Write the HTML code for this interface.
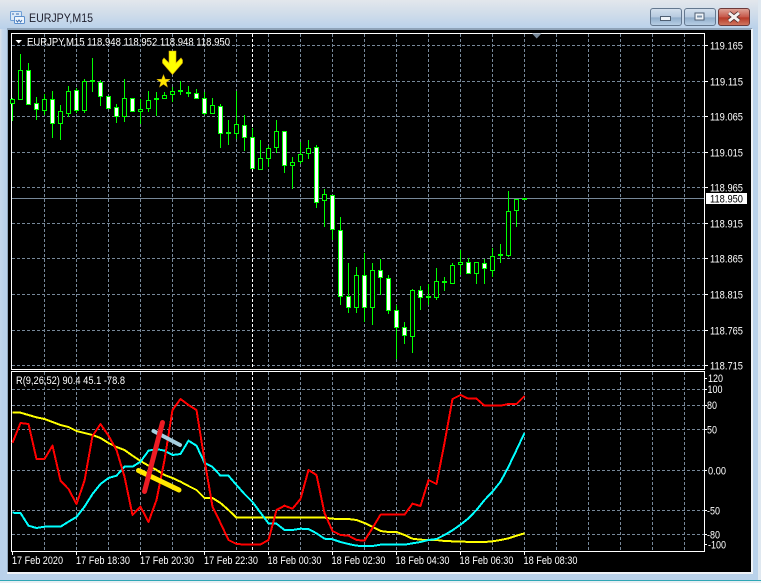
<!DOCTYPE html>
<html><head><meta charset="utf-8"><title>EURJPY,M15</title>
<style>
html,body{margin:0;padding:0;width:761px;height:583px;overflow:hidden;background:#fff}
svg{display:block}
text{font-family:"Liberation Sans",sans-serif;font-size:11px;fill:#fff}
</style></head><body>
<svg width="761" height="583" viewBox="0 0 761 583" xmlns="http://www.w3.org/2000/svg">
<defs>
<linearGradient id="tb" x1="0" y1="0" x2="0" y2="1"><stop offset="0" stop-color="#e3e7ec"/><stop offset=".5" stop-color="#cfdcea"/><stop offset="1" stop-color="#b9d1ea"/></linearGradient>
<linearGradient id="lf" x1="0" y1="0" x2="1" y2="1"><stop offset="0" stop-color="#dde3ea"/><stop offset=".15" stop-color="#c5d8ec"/><stop offset=".5" stop-color="#b9d1ea"/><stop offset="1" stop-color="#bad2ea"/></linearGradient>
<linearGradient id="bt" x1="0" y1="0" x2="0" y2="1"><stop offset="0" stop-color="#d5e1ee"/><stop offset=".5" stop-color="#b6cadf"/><stop offset=".55" stop-color="#91aecb"/><stop offset="1" stop-color="#b9d0e6"/></linearGradient>
<linearGradient id="cl" x1="0" y1="0" x2="0" y2="1"><stop offset="0" stop-color="#dfa69a"/><stop offset=".5" stop-color="#c7594a"/><stop offset=".55" stop-color="#b73a28"/><stop offset="1" stop-color="#d17a63"/></linearGradient>
</defs>
<rect width="761" height="583" fill="#bad2ea"/>
<rect width="761" height="29" fill="url(#tb)"/>
<rect x="0" y="29" width="8" height="551" fill="url(#lf)"/>
<rect x="7" y="28" width="745" height="2" fill="#8fa3b8"/>
<rect x="7" y="29" width="1" height="545" fill="#8ea4ba"/>
<rect x="751" y="29" width="2" height="545" fill="#eef2f6"/>
<rect x="7" y="572" width="746" height="2" fill="#eef2f6"/>
<rect x="0" y="580" width="761" height="1" fill="#2fa6b5"/>
<rect x="0" y="581" width="761" height="2" fill="#e8eef3"/>
<rect x="758" y="0" width="3" height="580" fill="#dfe8f0"/>

<!-- title -->
<g>
<rect x="10.5" y="11.5" width="11" height="9" rx="1" fill="#dbe9f7" stroke="#6f9fd6"/>
<rect x="14.5" y="16.5" width="10" height="7" rx="1" fill="#eef5fc" stroke="#5c8fcc"/>
<path d="M12 14h2M16 14h3M16 20l1.500 2 1.500-2 1.500 2 1.500-2" fill="none" stroke="#3e6fb0"/>
</g>
<text x="29" y="22" style="font-size:12px;fill:#1d1d2b" textLength="64" lengthAdjust="spacingAndGlyphs">EURJPY,M15</text>

<!-- buttons -->
<rect x="650.500" y="8.500" width="31" height="17" rx="2.500" fill="url(#bt)" stroke="#64788f"/>
<rect x="684.500" y="8.500" width="31" height="17" rx="2.500" fill="url(#bt)" stroke="#64788f"/>
<rect x="718.500" y="8.500" width="31" height="17" rx="2.500" fill="url(#cl)" stroke="#6d3a3a"/>
<rect x="660.500" y="16.500" width="10" height="4" fill="#eef3f8" stroke="#4f5f72"/>
<rect x="695" y="13" width="9" height="7" fill="#eef3f8" stroke="#4f5f72"/>
<rect x="697" y="15.500" width="5" height="2" fill="#7d93aa"/>
<path d="M729 13l10 8M739 13l-10 8" stroke="#4a2a2a" stroke-width="4.500"/>
<path d="M729 13l10 8M739 13l-10 8" stroke="#f4f1ef" stroke-width="3"/>

<!-- chart background -->
<rect x="8" y="30" width="743" height="542" fill="#000"/>

<!-- grid -->
<g fill="none" stroke="#778899" stroke-dasharray="3 2">
<path d="M12 45.500H704M12 81.500H704M12 116.500H704M12 152.500H704M12 187.500H704M12 223.500H704M12 258.500H704M12 294.500H704M12 330.500H704M12 365.500H704"/>
<path d="M12 389.500H704M12 405.500H704M12 429.500H704M12 470.500H704M12 510.500H704M12 534.500H704"/>
<path d="M44.500 34V369M76.500 34V369M108.500 34V369M140.500 34V369M172.500 34V369M204.500 34V369M236.500 34V369M268.500 34V369M300.500 34V369M332.500 34V369M364.500 34V369M396.500 34V369M428.500 34V369M460.500 34V369M492.500 34V369M524.500 34V369M556.500 34V369M588.500 34V369M620.500 34V369M652.500 34V369M684.500 34V369"/>
<path d="M44.500 372V551M76.500 372V551M108.500 372V551M140.500 372V551M172.500 372V551M204.500 372V551M236.500 372V551M268.500 372V551M300.500 372V551M332.500 372V551M364.500 372V551M396.500 372V551M428.500 372V551M460.500 372V551M492.500 372V551M524.500 372V551M556.500 372V551M588.500 372V551M620.500 372V551M652.500 372V551M684.500 372V551"/>
</g>
<path d="M252.500 34V369M252.500 372V551" stroke="#fff" stroke-dasharray="3 2" fill="none"/>

<!-- bid line -->
<path d="M12 198.500H704" stroke="#778899"/>

<!-- frames -->
<g fill="none" stroke="#fff">
<rect x="11.500" y="33.500" width="693" height="336"/>
<rect x="11.500" y="371.500" width="693" height="180"/>
<path d="M705 45.500h3M705 81.500h3M705 116.500h3M705 152.500h3M705 187.500h3M705 223.500h3M705 258.500h3M705 294.500h3M705 330.500h3M705 365.500h3"/>
<path d="M705 378.500h2M705 389.500h2M705 405.500h2M705 429.500h2M705 470.500h2M705 510.500h2M705 534.500h2M705 544.500h2"/>
<path d="M12.500 552v3M76.500 552v3M140.500 552v3M204.500 552v3M268.500 552v3M332.500 552v3M396.500 552v3M460.500 552v3M524.500 552v3"/>
</g>

<!-- wicks -->
<path fill="none" stroke="#0f0" d="M12.500 98V121M20.500 54V100M28.500 63V105M36.500 97V120M44.500 94V115M52.500 91V138M60.500 105V140M68.500 86V117M76.500 88V113M84.500 79V113M92.500 58V92M100.500 80V106M108.500 96V108M116.500 104V123M124.500 79V122M132.500 98V111M140.500 99V124M148.500 91V112M156.500 92V116M164.500 92V98M172.500 87V102M180.500 81V95M188.500 86V97M196.500 89V98M204.500 92V115M212.500 98V113M220.500 104V148M228.500 120V145M236.500 91V139M244.500 115V151M252.500 128V169M260.500 140V170M268.500 146V167M276.500 120V153M284.500 131V173M292.500 157V189M300.500 142V164M308.500 140V159M316.500 145V208M324.500 189V227M332.500 195V240M340.500 217V305M348.500 263V313M356.500 267V313M364.500 253V322M372.500 263V325M380.500 259V295M388.500 275V314M396.500 305V359M404.500 322V344M412.500 289V353M420.500 286V310M428.500 284V305M436.500 268V300M444.500 277V291M452.500 263V284M460.500 250V275M468.500 258V273M476.500 262V284M484.500 259V284M492.500 248V277M500.500 244V263M508.500 191V257M516.500 199V227M524.500 198V200"/>

<!-- hollow bodies -->
<path fill="#000" stroke="#0f0" d="M10.500 99.500h4V103.500h-4zM18.500 70.500h4V99.500h-4zM42.500 99.500h4V110.500h-4zM58.500 111.500h4V123.500h-4zM66.500 91.500h4V113.500h-4zM82.500 81.500h4V110.500h-4zM122.500 98.500h4V116.500h-4zM138.500 109.500h4V111.500h-4zM146.500 100.500h4V108.500h-4zM162.500 95.500h4V98.500h-4zM170.500 91.500h4V94.500h-4zM210.500 105.500h4V113.500h-4zM234.500 124.500h4V133.500h-4zM258.500 158.500h4V169.500h-4zM266.500 148.500h4V158.500h-4zM274.500 131.500h4V147.500h-4zM290.500 162.500h4V165.500h-4zM298.500 154.500h4V161.500h-4zM306.500 148.500h4V153.500h-4zM322.500 194.500h4V200.500h-4zM354.500 275.500h4V307.500h-4zM370.500 270.500h4V307.500h-4zM410.500 290.500h4V336.500h-4zM434.500 281.500h4V297.500h-4zM450.500 265.500h4V283.500h-4zM458.500 262.500h4V264.500h-4zM474.500 262.500h4V273.500h-4zM490.500 256.500h4V270.500h-4zM506.500 211.500h4V255.500h-4zM514.500 199.500h4V210.500h-4z"/>

<!-- filled bodies -->
<path fill="#fff" stroke="#0f0" d="M26.500 70.500h4V104.500h-4zM34.500 103.500h4V109.500h-4zM50.500 99.500h4V123.500h-4zM74.500 90.500h4V110.500h-4zM98.500 82.500h4V96.500h-4zM106.500 96.500h4V108.500h-4zM114.500 107.500h4V116.500h-4zM130.500 98.500h4V111.500h-4zM194.500 93.500h4V98.500h-4zM202.500 98.500h4V113.500h-4zM218.500 106.500h4V133.500h-4zM242.500 125.500h4V137.500h-4zM250.500 137.500h4V168.500h-4zM282.500 131.500h4V165.500h-4zM314.500 147.500h4V202.500h-4zM330.500 195.500h4V229.500h-4zM338.500 230.500h4V296.500h-4zM346.500 296.500h4V307.500h-4zM362.500 275.500h4V307.500h-4zM378.500 270.500h4V277.500h-4zM386.500 278.500h4V310.500h-4zM394.500 310.500h4V327.500h-4zM402.500 327.500h4V335.500h-4zM418.500 290.500h4V297.500h-4zM466.500 262.500h4V273.500h-4zM482.500 263.500h4V268.500h-4z"/>

<!-- doji -->
<path fill="#0f0" d="M90 80h5v2h-5zM154 98h5v2h-5zM178 90h5v2h-5zM186 92h5v2h-5zM226 132h5v2h-5zM426 296h5v2h-5zM442 281h5v2h-5zM498 254h5v2h-5zM522 198h5v2h-5z"/>

<!-- arrow and star -->
<polygon points="169,51 176,51 176,63 181,58 182.500,60 182.500,63 172.500,74.500 162.500,63 162.500,60 164,58 169,63" fill="#ff0" stroke="#d9a800" stroke-width=".6"/>
<polygon points="163.500,74.500 165.300,79.200 170.200,79.300 166.200,82.400 167.600,87.200 163.500,84.300 159.400,87.200 160.800,82.400 156.800,79.300 161.700,79.200" fill="#ffe600" stroke="#c79a00" stroke-width=".5"/>

<!-- top markers -->
<polygon points="532,33.500 541.500,33.500 536.700,38.500" fill="#778899"/>
<polygon points="15.500,40 22,40 18.700,43.500" fill="#fff"/>

<!-- header text -->
<text x="27" y="45.500" textLength="203" lengthAdjust="spacingAndGlyphs">EURJPY,M15  118.948 118.952 118.948 118.950</text>
<text x="16" y="384" textLength="109" lengthAdjust="spacingAndGlyphs">R(9,26,52) 90.4 45.1 -78.8</text>

<!-- price labels -->
<g>
<text x="710" y="49.500" textLength="33" lengthAdjust="spacingAndGlyphs">119.165</text>
<text x="710" y="85.500" textLength="33" lengthAdjust="spacingAndGlyphs">119.115</text>
<text x="710" y="120.500" textLength="33" lengthAdjust="spacingAndGlyphs">119.065</text>
<text x="710" y="156.500" textLength="33" lengthAdjust="spacingAndGlyphs">119.015</text>
<text x="710" y="191.500" textLength="33" lengthAdjust="spacingAndGlyphs">118.965</text>
<text x="710" y="227.500" textLength="33" lengthAdjust="spacingAndGlyphs">118.915</text>
<text x="710" y="262.500" textLength="33" lengthAdjust="spacingAndGlyphs">118.865</text>
<text x="710" y="298.500" textLength="33" lengthAdjust="spacingAndGlyphs">118.815</text>
<text x="710" y="334.500" textLength="33" lengthAdjust="spacingAndGlyphs">118.765</text>
<text x="710" y="369.500" textLength="33" lengthAdjust="spacingAndGlyphs">118.715</text>
</g>
<rect x="706" y="193" width="41" height="11" fill="#fff"/>
<text x="710" y="202.500" style="fill:#000" textLength="33" lengthAdjust="spacingAndGlyphs">118.950</text>

<!-- sub labels -->
<text x="708" y="382" textLength="15" lengthAdjust="spacingAndGlyphs">120</text>
<text x="707.500" y="393" textLength="15" lengthAdjust="spacingAndGlyphs">100</text>
<text x="707" y="409" textLength="10" lengthAdjust="spacingAndGlyphs">80</text>
<text x="707" y="433.500" textLength="10" lengthAdjust="spacingAndGlyphs">50</text>
<text x="708" y="474.500" textLength="18" lengthAdjust="spacingAndGlyphs">0.00</text>
<text x="707" y="514.500" textLength="13" lengthAdjust="spacingAndGlyphs">-50</text>
<text x="707" y="538.500" textLength="13" lengthAdjust="spacingAndGlyphs">-80</text>
<text x="708" y="548.500" textLength="18" lengthAdjust="spacingAndGlyphs">-100</text>

<!-- time labels -->
<text x="12" y="564" textLength="51" lengthAdjust="spacingAndGlyphs">17 Feb 2020</text>
<text x="76" y="564" textLength="54" lengthAdjust="spacingAndGlyphs">17 Feb 18:30</text>
<text x="140" y="564" textLength="54" lengthAdjust="spacingAndGlyphs">17 Feb 20:30</text>
<text x="204" y="564" textLength="54" lengthAdjust="spacingAndGlyphs">17 Feb 22:30</text>
<text x="267.500" y="564" textLength="54" lengthAdjust="spacingAndGlyphs">18 Feb 00:30</text>
<text x="331.500" y="564" textLength="54" lengthAdjust="spacingAndGlyphs">18 Feb 02:30</text>
<text x="395.500" y="564" textLength="54" lengthAdjust="spacingAndGlyphs">18 Feb 04:30</text>
<text x="459.500" y="564" textLength="54" lengthAdjust="spacingAndGlyphs">18 Feb 06:30</text>
<text x="523.500" y="564" textLength="54" lengthAdjust="spacingAndGlyphs">18 Feb 08:30</text>

<!-- indicator lines -->
<g fill="none" stroke-width="2" stroke-linejoin="round" shape-rendering="crispEdges">
<polyline stroke="#ff0" points="12.500,412.700 20.500,412.700 28.500,415 36.500,417.300 44.500,419 52.500,422 60.500,425 68.500,427 76.500,431 84.500,433 92.500,435 100.500,438 108.500,443 116.500,447 124.500,450 132.500,455.700 140.500,461 148.500,465.700 156.500,470 164.500,475 172.500,478 180.500,481.700 188.500,486 196.500,490 204.500,498 212.500,498 220.500,503 228.500,510 236.500,517.700 244.500,517.700 252.500,517.700 260.500,517.700 268.500,517.700 276.500,517.700 284.500,517.700 292.500,517.700 300.500,517.700 308.500,517.700 316.500,517.700 324.500,517.700 332.500,518.700 340.500,519 348.500,519 356.500,520 364.500,523 372.500,526.700 380.500,531 388.500,532 396.500,532 404.500,535 412.500,538.700 420.500,539.700 428.500,540 436.500,540 444.500,541 452.500,541.300 460.500,541.300 468.500,542 476.500,542 484.500,542 492.500,541.300 500.500,540 508.500,538.300 516.500,535.700 524.500,533.300"/>
<polyline stroke="#0ff" points="12.500,512.700 20.500,513 28.500,525.700 36.500,528 44.500,526.700 52.500,526.700 60.500,526.700 68.500,521.700 76.500,517 84.500,506.700 92.500,494 100.500,484 108.500,478 116.500,475.700 124.500,466.700 132.500,466.700 140.500,461.700 148.500,450.700 156.500,449 164.500,450.700 172.500,455 180.500,454 188.500,440.700 196.500,445.700 204.500,462.700 212.500,467 220.500,475.700 228.500,475.700 236.500,485 244.500,494 252.500,502 260.500,512.700 268.500,523.300 276.500,523.700 284.500,530 292.500,530 300.500,528.700 308.500,529 316.500,533.300 324.500,538.700 332.500,539.300 340.500,542 348.500,544 356.500,545.700 364.500,546 372.500,546 380.500,544.700 388.500,544.700 396.500,544.700 404.500,544.700 412.500,543.300 420.500,542 428.500,540 436.500,539 444.500,535 452.500,530.300 460.500,524.700 468.500,518.300 476.500,510 484.500,500 492.500,491.700 500.500,481.700 508.500,466.700 516.500,450 524.500,433"/>
<polyline stroke="#f00" points="12.500,442.700 20.500,423 28.500,424 36.500,459 44.500,459 52.500,445.700 60.500,480.700 68.500,489 76.500,504 84.500,480.700 92.500,436 100.500,424 108.500,435.700 116.500,450 124.500,476.700 132.500,515 140.500,506.700 148.500,522 156.500,500 164.500,460 172.500,410 180.500,399 188.500,405 196.500,410 204.500,460 212.500,506.700 220.500,523 228.500,540 236.500,544 244.500,544.500 252.500,544.500 260.500,544.500 268.500,540 276.500,510 284.500,505.700 292.500,508.700 300.500,499 308.500,470 316.500,475 324.500,513 332.500,531 340.500,535 348.500,535.700 356.500,540 364.500,540.700 372.500,528 380.500,514.700 388.500,514.700 396.500,514.700 404.500,514.700 412.500,503.700 420.500,506 428.500,480 436.500,484 444.500,443 452.500,399 460.500,395 468.500,398.700 476.500,398.700 484.500,405.700 492.500,405.700 500.500,405.700 508.500,404 516.500,404 524.500,396"/>
</g>

<!-- drawn strokes -->
<g fill="none" stroke-linecap="round">
<path d="M153.500 431L180 445" stroke="#a6cfe0" stroke-width="4"/>
<path d="M138.500 470.500L179 490" stroke="#ffe800" stroke-width="5"/>
<path d="M144.500 491.500L162.500 422.500" stroke="#ed1c24" stroke-width="5"/>
</g>
</svg>
</body></html>
